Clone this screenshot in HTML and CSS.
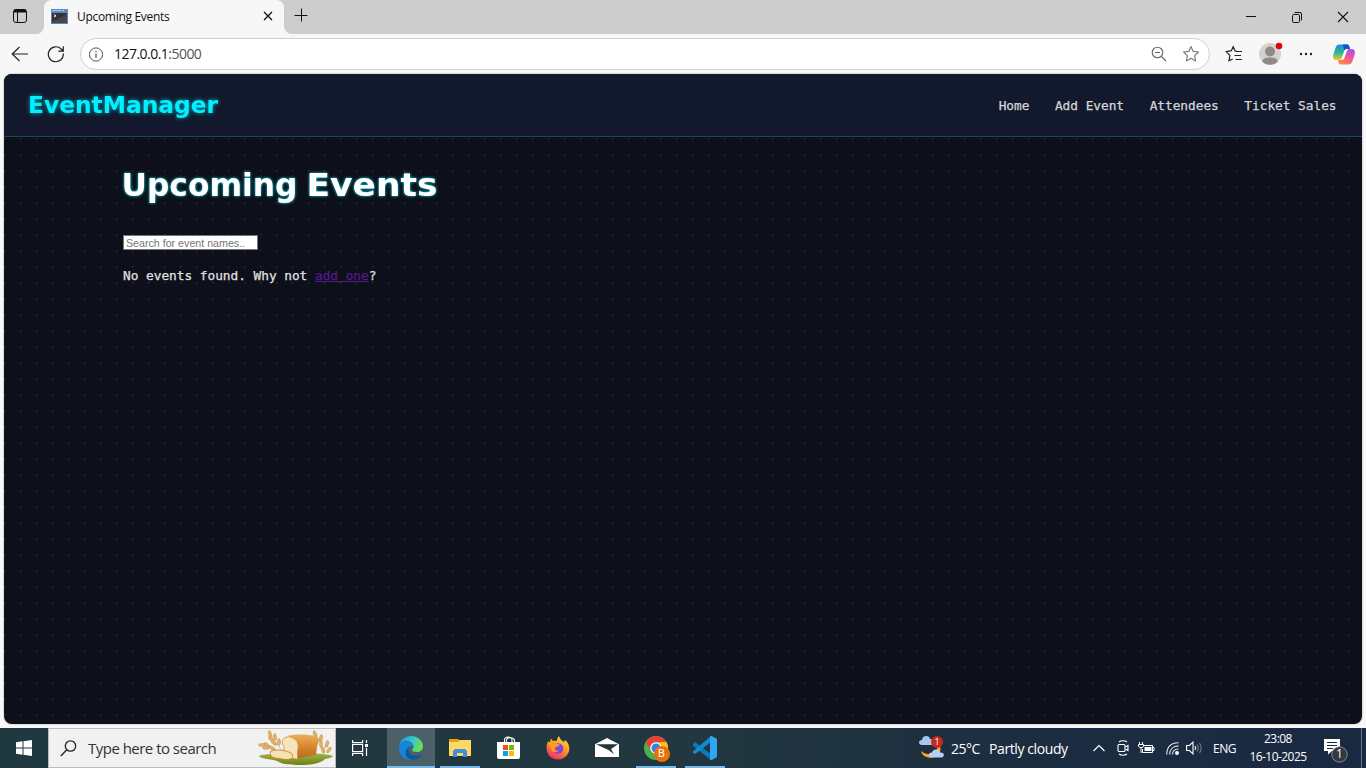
FILE: index.html
```html
<!DOCTYPE html>
<html lang="en">
<head>
<meta charset="utf-8">
<title>Upcoming Events</title>
<link rel="stylesheet" href="styles.css">
</head>
<body>
<div class="tabstrip">
  <div class="tab-actions">
    <svg width="16" height="16" viewBox="0 0 16 16" fill="none" stroke="#111"><rect x="1.5" y="1.5" width="13" height="13" rx="2.5"/><path d="M2 3h12" stroke-width="3"/><path d="M5.5 4v10"/></svg>
  </div>
  <div class="tab">
    <svg class="favicon" width="17" height="15" viewBox="0 0 17 15"><rect x=".5" y=".5" width="16" height="14" fill="#333" stroke="#5c83bd"/><path d="M0 0h17v4H0z" fill="#5987cc"/><path d="M1 1h10v1H1z" fill="#a9c4ec"/><path d="M12 1h1v1h-1z" fill="#fff"/><path d="M14 1h2v1h-2z" fill="#e85b42"/><path d="M1 13L16 5v9H1z" fill="#484848"/><path d="M3 5.500l2 1.300-2 1.300" stroke="#fff" fill="none"/></svg>
    <span class="tab-title">Upcoming Events</span>
    <svg class="tab-close" width="10" height="10" viewBox="0 0 10 10" stroke="#111" stroke-width="1.300"><path d="M1 1l8 8M9 1L1 9"/></svg>
  </div>
  <svg class="new-tab" width="14" height="14" viewBox="0 0 14 14" stroke="#111"><path d="M7.500 .5v13M.5 7.500h13"/></svg>
  <div class="window-controls">
    <svg width="12" height="12" viewBox="0 0 12 12" fill="none" stroke="#111"><path d="M1 5.500h10"/></svg>
    <svg width="12" height="12" viewBox="0 0 12 12" fill="none" stroke="#111"><rect x="1.500" y="3.500" width="7" height="8" rx="1.200"/><path d="M3.500 1.500H9a1.500 1.500 0 0 1 1.500 1.500v6.500"/></svg>
    <svg width="12" height="12" viewBox="0 0 12 12" fill="none" stroke="#111" stroke-width="1.100"><path d="M1 1l10 10M11 1L1 11"/></svg>
  </div>
</div>
<div class="toolbar">
  <svg class="back" width="18" height="16" viewBox="0 0 18 16" fill="none" stroke="#222" stroke-width="1.150"><path d="M8.500 1L1.200 8l7.300 7M1.500 8H17"/></svg>
  <svg class="reload" width="18" height="18" viewBox="0 0 18 18" fill="none" stroke="#222" stroke-width="1.200"><path d="M16.300 8.500A7.500 7.500 0 1 1 14.200 4l1.800 1.700M16.300 1.300v4.900h-5"/></svg>
  <div class="address">
    <svg width="15" height="15" viewBox="0 0 15 15" fill="none" stroke="#555"><circle cx="7" cy="7.500" r="6.600"/><path d="M7 6.500V11M7 4v1.300" stroke-width="1.200"/></svg>
    <span class="url">127.0.0.1<span class="port">:5000</span></span>
    <svg class="zoom-icon" width="16" height="16" viewBox="0 0 16 16" fill="none" stroke="#666" stroke-width="1.100"><circle cx="6.500" cy="6.500" r="5.300"/><path d="M4 6.500h5M10.500 10.500l4.500 4.500"/></svg>
    <svg class="star" width="18" height="18" viewBox="0 0 18 18" fill="none" stroke="#777" stroke-width="1.100"><path d="M9 1.500l2.200 4.900 5.300.6-3.900 3.600 1 5.300L9 13.300l-4.600 2.600 1-5.300L1.500 7l5.300-.6z" stroke-linejoin="round"/></svg>
  </div>
  <svg class="favorites" width="18" height="18" viewBox="0 0 18 18" fill="none" stroke="#222" stroke-width="1.200"><path d="M11.300 5.800L10 5.700 8.200 1.700 6.300 5.700 1.200 6.600l3.700 3.800-.9 5.300 3.700-1.700M10.500 6.500H17M9.500 10.500H16M10.500 14.500H17"/></svg>
  <svg class="avatar" width="24" height="24" viewBox="0 0 24 24"><circle cx="11" cy="12" r="11" fill="#d4d2cf"/><circle cx="11" cy="9.500" r="5" fill="#8d8a87"/><path d="M3.200 19.500C4 16 7 15.500 11 15.500s7 .5 7.800 4A11 11 0 0 1 3.200 19.500z" fill="#8d8a87"/><circle cx="20" cy="4" r="3.300" fill="#e8000d"/></svg>
  <svg class="more" width="14" height="4" viewBox="0 0 14 4" fill="#222"><circle cx="2" cy="2" r="1.200"/><circle cx="7" cy="2" r="1.200"/><circle cx="12" cy="2" r="1.200"/></svg>
  <svg class="copilot" width="22" height="21" viewBox="0 0 22 21">
    <defs><linearGradient id="ca" x1="0" y1="0" x2="0" y2="1"><stop stop-color="#138ee9"/><stop offset=".5" stop-color="#27b79b"/><stop offset="1" stop-color="#f4cb20"/></linearGradient><linearGradient id="cb" x1=".8" y1="0" x2=".3" y2="1"><stop stop-color="#a550ec"/><stop offset=".5" stop-color="#ef579a"/><stop offset="1" stop-color="#ff8a42"/></linearGradient></defs>
    <path d="M7 .5h7c2 0 2.300 1.500 3 4.500h-3c-2 0-2.400 1-3 3L9 14c-.5 1.500-1 2-3 2H3c-3 0-3.200-3-2.500-6l2-6C3.200 1.500 4.500.5 7 .5z" fill="url(#ca)"/>
    <path d="M10 .5h4c2 0 2.300 1.500 3 4.500h-3c-1.300 0-2 .5-2.600 2z" fill="#174fce"/>
    <path d="M15 20.500H8c-2 0-2.500-1.500-3-4.500h2c2 0 2.800-1 3.300-3l1.700-5c.5-2 1.500-3 3-3h4c3 0 3.200 3 2.500 6l-2 6c-.8 2.500-2 3.500-4.500 3.500z" fill="url(#cb)"/>
    <path d="M11.300 7c.5-1.300 1.200-2 2.700-2h2c-1.500.5-2 1.700-2.500 3.200L11.400 14c-.6 1.500-1.400 2-2.900 2H6c1.800 0 2.600-.8 3.200-2.500z" fill="#fff"/>
  </svg>
</div>
<div class="frame">
  <div class="page">
    <header class="navbar">
      <svg class="brand" width="200" height="34"><text x="-1" y="25" textLength="190" lengthAdjust="spacingAndGlyphs">EventManager</text></svg>
      <nav class="links"><a>Home</a><a>Add Event</a><a>Attendees</a><a>Ticket Sales</a></nav>
    </header>
    <main class="content">
      <h1><svg class="headline" width="330" height="46"><text x="-1.500" y="30" textLength="176" lengthAdjust="spacingAndGlyphs">Upcoming</text><text x="183.500" y="30" textLength="131" lengthAdjust="spacingAndGlyphs">Events</text></svg></h1>
      <input class="search" type="text" placeholder="Search for event names..">
      <p class="empty">No events found. Why not <a href="#">add one</a>?</p>
    </main>
  </div>
</div>
<div class="taskbar">
  <div class="start"><svg width="16" height="16" viewBox="0 0 16 16" fill="#fff"><path d="M0 2.300L6.500 1.300V7.500H0zM7.500 1.200L16 0v7.500H7.500zM0 8.500h6.500v6.200L0 13.800zM7.500 8.500H16V16l-8.500-1.200z"/></svg></div>
  <div class="tasksearch">
    <svg width="17" height="17" viewBox="0 0 17 17" fill="none" stroke="#222" stroke-width="1.300"><circle cx="10.500" cy="6" r="5.200"/><path d="M6.800 9.800L.8 16"/></svg>
    <span class="tasksearch-label">Type here to search</span>
    <svg class="bread" width="76" height="38" viewBox="0 0 76 38">
      <defs><linearGradient id="loaf" x1="0" y1="0" x2="0" y2="1"><stop stop-color="#efb05c"/><stop offset=".45" stop-color="#d98b35"/><stop offset="1" stop-color="#b8691d"/></linearGradient><linearGradient id="field" x1="0" y1="0" x2="0" y2="1"><stop stop-color="#a3b443"/><stop offset="1" stop-color="#6e8016"/></linearGradient></defs>
      <path d="M1 27c5-3 65-4 74 0-1 2-5 2-8 3-4 4-12 6-23 6-14 0-20-1-25-4-6-2-17-2-18-5z" fill="url(#field)"/>
      <g stroke="#c9934a" fill="#dfb36d" stroke-width=".5"><path d="M24 22L12 4M20 22L2 16M59 20L56 4M64 24L70 12" fill="none"/>
      <ellipse cx="12" cy="5" rx="1.500" ry="3.500" transform="rotate(-15 12 5)"/><ellipse cx="13" cy="10" rx="1.500" ry="3.300" transform="rotate(-45 13 10)"/><ellipse cx="17" cy="8" rx="1.500" ry="3.500" transform="rotate(-5 17 8)"/><ellipse cx="16" cy="14" rx="1.500" ry="3.300" transform="rotate(-50 16 14)"/><ellipse cx="21" cy="13" rx="1.500" ry="3.500"/><ellipse cx="4" cy="16" rx="3.500" ry="1.400"/><ellipse cx="9" cy="16" rx="3.500" ry="1.400" transform="rotate(35 9 16)"/><ellipse cx="8" cy="19" rx="3.500" ry="1.400"/><ellipse cx="14" cy="19" rx="3.500" ry="1.400" transform="rotate(30 14 19)"/>
      <ellipse cx="57" cy="5" rx="1.500" ry="3.500" transform="rotate(-20 57 5)"/><ellipse cx="59" cy="10" rx="1.500" ry="3.500" transform="rotate(-35 59 10)"/><ellipse cx="63" cy="9" rx="1.500" ry="3.500" transform="rotate(10 63 9)"/><ellipse cx="63" cy="15" rx="1.500" ry="3.500"/><ellipse cx="69" cy="15" rx="1.500" ry="3.500" transform="rotate(15 69 15)"/><ellipse cx="65" cy="21" rx="1.500" ry="3.500" transform="rotate(-20 65 21)"/><ellipse cx="71" cy="21" rx="1.500" ry="3.300" transform="rotate(35 71 21)"/></g>
      <path d="M30 6.500c7-1.500 18-1.500 25 0 6 1.500 6.500 7 4 10.500L58 26l-19 3.500V14z" fill="url(#loaf)"/>
      <path d="M27 8.500c5-2 10 1 12 4 2 4 1 7 .5 10v7.500c-5 0-10-2-13.500-5v-8c-3-2-2-7 1-8.500z" fill="#f9e3ba" stroke="#d08d40" stroke-width=".8"/>
      <path d="M13 22c4-2 17-1 21 3 2 4-1 6-7 5.500L17 29c-4-1-6-4-4-7z" fill="#f7dfb2" stroke="#bd752a" stroke-width=".8"/>
    </svg>
  </div>
  <div class="app"><svg width="16" height="16" viewBox="0 0 16 16" fill="none" stroke="#fff" stroke-width="1.200"><path d="M.6 0v2.600h10V0M.6 16v-2.600h10V16M.6 4.500h10v7H.6zM14.500 0v3M14.500 8v8"/><path d="M13 4h3v3h-3z" fill="#fff" stroke="none"/></svg></div>
  <div class="app active"><svg width="24" height="24" viewBox="0 0 24 24">
    <defs><linearGradient id="eg" x1="0" y1=".3" x2="1" y2=".6"><stop stop-color="#2097df"/><stop offset=".5" stop-color="#34c6cf"/><stop offset="1" stop-color="#6ee344"/></linearGradient></defs>
    <path d="M0 11C0 5 5 0 12 0s12 5 12 10c0 4-3 6-6 6-3 0-5-1-5-2 0-1 1.500-1.500 1.500-3.500C14.500 7 11 5 7.500 5 4 5 1 7 0 11z" fill="url(#eg)"/>
    <path d="M0 12c0-4 3.500-6.500 7.500-6.500 4 0 7 2 7 5C13 9 9 10 9 14.500c0 5 5 8.500 9 7.500-2 1.500-4 2-6 2C5 24 0 18.500 0 12z" fill="#1686db"/>
    <path d="M9.500 13c-1 5 4.500 8.500 12.500 5.500.7-.3 1 .2.500.8C20.500 22 17 24 13.500 24 9 23 6.500 20.500 6.500 17c0-3 1.500-5 4.500-6z" fill="#10559f"/></svg></div>
  <div class="app open"><svg width="22" height="18" viewBox="0 0 22 18"><path d="M0 0h9l1.500 1.500V5H0z" fill="#e8a40b"/><path d="M0 3h9l1.500-2H22v16H0z" fill="#ffd766"/><path d="M4 18v-6l2-2h10l2 2v6h-4v-4H8v4z" fill="#3d91dc"/></svg></div>
  <div class="app"><svg width="23" height="24" viewBox="0 0 23 24"><path d="M7.500 6V4c0-4 7.500-4 7.500 0v2M9.500 6V4c0-3 7-3 8 0v2" fill="none" stroke="#fff" stroke-width="1.100"/><path d="M0 6h23v15a2 2 0 0 1-2 2H2a2 2 0 0 1-2-2z" fill="#fff"/><path d="M6 9h5v5H6z" fill="#f25022"/><path d="M12 9h5v5h-5z" fill="#7fba00"/><path d="M6 15h5v5H6z" fill="#00a4ef"/><path d="M12 15h5v5h-5z" fill="#ffb900"/></svg></div>
  <div class="app"><svg width="24" height="24" viewBox="0 0 24 24"><defs><linearGradient id="ff" x1=".8" y1="0" x2=".3" y2="1"><stop stop-color="#ffe83c"/><stop offset=".45" stop-color="#ff9825"/><stop offset="1" stop-color="#f52b61"/></linearGradient></defs><path d="M13 0c1 3 2 4 5 6l1-2c3 2 4.500 6 4.300 9C23 19 18 23.500 12 23.500S.5 19 .5 12c0-3 .5-5 2-7l1 2L5 2.500 7 5c2-.5 3 0 4 0 0-2 .5-3.500 2-5z" fill="url(#ff)"/><circle cx="12" cy="12.500" r="5.300" fill="#7d46d6"/><path d="M2 7c3-2 6-2 8 .5l4 1.200c-1 2-4 1.500-5 3.300s1 3 4 2.500c-4 3-8 1-8-2z" fill="#ff9b20"/></svg></div>
  <div class="app"><svg width="24" height="20" viewBox="0 0 24 20"><path d="M0 6.200L12 0l12 6.200V19H0z" fill="#fff"/><path d="M1 6.300h22l-7 4.600 3 5.400L13.500 12z" fill="#20363e"/></svg></div>
  <div class="app open"><div class="chrome"><svg width="27" height="27" viewBox="0 0 27 27"><circle cx="12" cy="12" r="12" fill="#4caf50"/><path d="M1.600 6A12 12 0 0 1 22.400 6H12a6 6 0 0 0-5.200 9z" fill="#e74335"/><path d="M22.400 6A12 12 0 0 1 12 24l5.200-9A6 6 0 0 0 12 6z" fill="#fbc116"/><circle cx="12" cy="12" r="5.800" fill="#fff"/><circle cx="12" cy="12" r="4.500" fill="#3b7de9"/><circle cx="18" cy="18" r="8" fill="#e8710a"/></svg><span class="profile">B</span></div></div>
  <div class="app open"><svg width="24" height="24" viewBox="0 0 24 24"><path d="M0 8l2-2 16 12v6L0 10z" fill="#0979bd"/><path d="M0 15v2l2 1L18 6V0L1 14.500z" fill="#128ace"/><path d="M17 0l2 .2L24 3v18l-5 3-2-.3z" fill="#2da8f0"/></svg></div>
  <div class="weather"><div class="weather-icon"><svg width="26" height="24" viewBox="0 0 26 24"><path d="M18 7c3 9-8 15-16 8 1 7 12 9 17 4 4-4 3-9-1-12z" fill="#ffa51d"/><path d="M3 9C-1 9-1 4 3 4c0-5 8-5 8-1 4-1 5 6 1 6z" fill="#a7c5f3"/><path d="M12 21c-3 0-3-5 1-4.500 1-4 7-4 8 0 5-.5 5 5 1 5H12z" fill="#b6cff4"/><circle cx="18" cy="6" r="6" fill="#c42b1c"/></svg><span class="alert">1</span></div><span class="temp">25°C</span><span class="sky">Partly cloudy</span></div>
  <div class="tray">
    <svg class="chev" width="12" height="8" viewBox="0 0 12 8" fill="none" stroke="#fff" stroke-width="1.200"><path d="M.5 7L6 1.500 11.500 7"/></svg>
    <svg class="meet" width="12" height="16" viewBox="0 0 12 16" fill="none" stroke="#fff" stroke-width="1.100"><rect x="1" y="4.500" width="7" height="7" rx="1"/><path d="M8.500 7L11 5.500v5L8.500 9M2 2c2-1.700 6-1.700 8 0M2 14c2 1.700 6 1.700 8 0"/></svg>
    <svg class="battery" width="17" height="12" viewBox="0 0 17 12" fill="none" stroke="#fff"><path d="M5 3.500h9.500v7h-10V7M14.500 5.500H16v3h-1.500"/><path d="M6.500 5h7v4h-7z" fill="#fff" stroke="none"/><path d="M1.500 0v2M4.500 0v2M.5 2.500h5v2l-1.500 1H2L.5 4.500zM3 6v5"/></svg>
    <svg class="wifi" width="13" height="13" viewBox="0 0 13 13" fill="none" stroke="#e5e8ee" stroke-width="1.100"><path d="M.7 12.500C1 5 5 .8 12.500.8M3.500 12.500c.3-5 3.500-8.600 9-8.600M6.400 12.500c.2-3.500 2.600-5.500 6.100-5.500"/><circle cx="11" cy="11" r="2" fill="#fff" stroke="none"/></svg>
    <svg class="sound" width="17" height="14" viewBox="0 0 17 14" fill="none" stroke="#fff" stroke-width="1.100"><path d="M.6 4.500h2.800L7 1.200v11.600L3.400 9.500H.6z"/><path d="M9 5q1.200 2 0 4"/><path d="M11 3.500q2.400 3.500 0 7M13.500 2q3.200 5 0 10" stroke="#718095"/></svg>
    <span class="lang">ENG</span>
    <div class="clock"><span>23:08</span><span class="date">16-10-2025</span></div>
    <div class="notify"><svg width="25" height="26" viewBox="0 0 25 26"><path d="M0 1h16v12H8l-4 3.500V13H0z" fill="#fff"/><path d="M3 4.500h10M3 7.500h10M3 10.500h6" stroke="#1d2b42"/><circle cx="15.500" cy="16.500" r="7.700" fill="#34383f" stroke="#858b94"/></svg><span class="count">1</span></div>
  </div>
</div>
</body>
</html>
```

FILE: styles.css
```css
* { box-sizing: border-box; }
body { margin: 0; width: 1366px; height: 768px; overflow: hidden; display: flex; flex-direction: column; font-family: "Open Sans", "Noto Sans", sans-serif; background: #f7f7f7; }
svg { display: block; flex: none; }
span { white-space: nowrap; }

.tabstrip { height: 34px; flex: none; background: #f7f7f7; display: flex; }
.tab-actions { width: 44px; padding: 8px 0 0 12px; border-radius: 0 0 8px 0; background: #cdcdcd; }
.tab { width: 240px; background: linear-gradient(#cdcdcd, #cdcdcd) 0 0 / 100% 10px no-repeat; position: relative; display: flex; align-items: center; padding: 0 11px 2px 7px; }
.tab::before { content: ""; position: absolute; inset: 0; border-radius: 8px 8px 0 0; background: #f7f7f7; }
.tab > * { position: relative; }
.tab-title { margin-left: 9px; font-size: 12px; letter-spacing: -.3px; color: #111; }
.tab-close { margin-left: auto; }
.new-tab { box-sizing: content-box; padding: 8px 10px 12px; background: #cdcdcd; border-radius: 0 0 0 8px; }
.window-controls { flex: 1; justify-content: flex-end; display: flex; gap: 34px; padding: 11px 17px 0 0; background: #cdcdcd; }

.toolbar { height: 40px; flex: none; display: flex; align-items: center; background: #f7f7f7; }
.back { margin-left: 11px; }
.reload { margin-left: 18px; }
.address { margin: 0 0 0 15px; width: 1130px; height: 32px; border: 1px solid #d0d0d0; border-radius: 16px; background: #fff; display: flex; align-items: center; padding: 0 9px 0 8px; }
.url { margin-left: 10px; font-size: 14px; letter-spacing: -.53px; color: #111; position: relative; top: -1px; }
.port { color: #555; }
.zoom-icon { margin-left: auto; }
.star { margin-left: 15px; }
.favorites { margin-left: 15px; }
.avatar { margin-left: 16px; }
.more { margin-left: 16px; }
.copilot { margin-left: 20px; }

.frame { height: 654px; flex: none; padding: 0 4px 4px; background: #f8f8f8; }
.page { height: 650px; border-radius: 8px; overflow: hidden; background-color: #0d0f1a; background-size: 16px 16px; background-image: conic-gradient(from 0deg at 2px 1px, transparent 75%, #1c2a34 0), conic-gradient(from 0deg at 1px 2px, transparent 75%, #1c2a34 0); box-shadow: 0 0 2px #999; }
.navbar { height: 63px; background: #12192d; border-bottom: 1px solid #1e4558; display: flex; align-items: center; justify-content: space-between; padding: 0 25.500px 0 25px; }
.brand { overflow: visible; fill: #00f0ff; filter: drop-shadow(0 0 2px #00f0ffaa); font: bold 23px "DejaVu Sans", sans-serif; }
.links { display: flex; gap: 25.6px; padding-top: 2px; }
.links a, .empty { font-family: "DejaVu Sans Mono", monospace; font-size: 12.8px; letter-spacing: -.026px; line-height: 20px; color: #d5d5d8; -webkit-text-stroke: .25px currentColor; }
.content { padding: 29px 119px 0; }
h1 { margin: 0; height: 69px; }
.headline { overflow: visible; fill: #fff; filter: drop-shadow(0 0 1.5px #00dff0); font: bold 32px "DejaVu Sans", sans-serif; }
.search { display: block; width: 135px; height: 15px; padding: 0 2px; border: 1px solid #767676; background: #fff; font: 10.67px "Liberation Sans", sans-serif; color: #222; }
.search::placeholder { color: #757575; }
.empty { margin: 16px 0 0; color: #e0e0e0; }
.empty a { color: #551a8b; }

.taskbar { height: 40px; flex: none; display: flex; padding-right: 4px; background: linear-gradient(90deg, #203940 0%, #22373f 50%, #1c2d40 75%, #1a2942 100%); color: #fff; }
.start { width: 48px; display: flex; align-items: center; justify-content: center; }
.tasksearch { width: 288px; background: #f1f1f1; border: 1px solid #bbb; display: flex; align-items: center; padding: 0 1px 0 11px; }
.tasksearch-label { margin-left: 11px; font-size: 15px; letter-spacing: -.52px; color: #333; }
.bread { margin-left: auto; }
.app { width: 49px; display: flex; align-items: center; justify-content: center; }
.app:nth-child(3) { width: 51px; padding-right: 4px; }
.app.active { width: 48px; background: #4b6067; border-bottom: 2px solid #76b9ed; padding-top: 2px; }
.app.open { width: 40px; margin: 0 4.5px; border-bottom: 2px solid #76b9ed; padding-top: 2px; }
.chrome { position: relative; padding-left: 3px; padding-top: 3px; }
.profile { position: absolute; left: 17px; top: 13px; width: 8px; text-align: center; font: 11px/16px Roboto, sans-serif; }
.weather { margin-left: auto; display: flex; align-items: center; font-size: 14px; }
.weather-icon { position: relative; }
.alert { position: absolute; left: 14px; top: 0; width: 8px; text-align: center; font-size: 9px; line-height: 12px; }
.temp { margin-left: 6px; width: 30px; letter-spacing: -.5px; }
.sky { margin-left: 8px; width: 80px; letter-spacing: -.4px; }
.tray { margin-left: 24px; width: 269px; display: flex; align-items: center; border-right: 1px solid #697789; }
.meet { margin-left: 12px; }
.battery { margin-left: 9px; }
.wifi { margin-left: 11px; }
.sound { margin-left: 7px; }
.lang { width: 24px; margin-left: 10px; font-size: 12px; letter-spacing: -.5px; }
.clock { width: 60px; margin-left: 11px; display: flex; flex-direction: column; align-items: center; font-size: 12px; line-height: 18px; letter-spacing: -.55px; }
.notify { position: relative; margin-left: 16px; padding-top: 6px; }
.count { position: absolute; left: 11px; top: 13px; width: 9px; text-align: center; font-size: 12px; line-height: 18px; }
```
